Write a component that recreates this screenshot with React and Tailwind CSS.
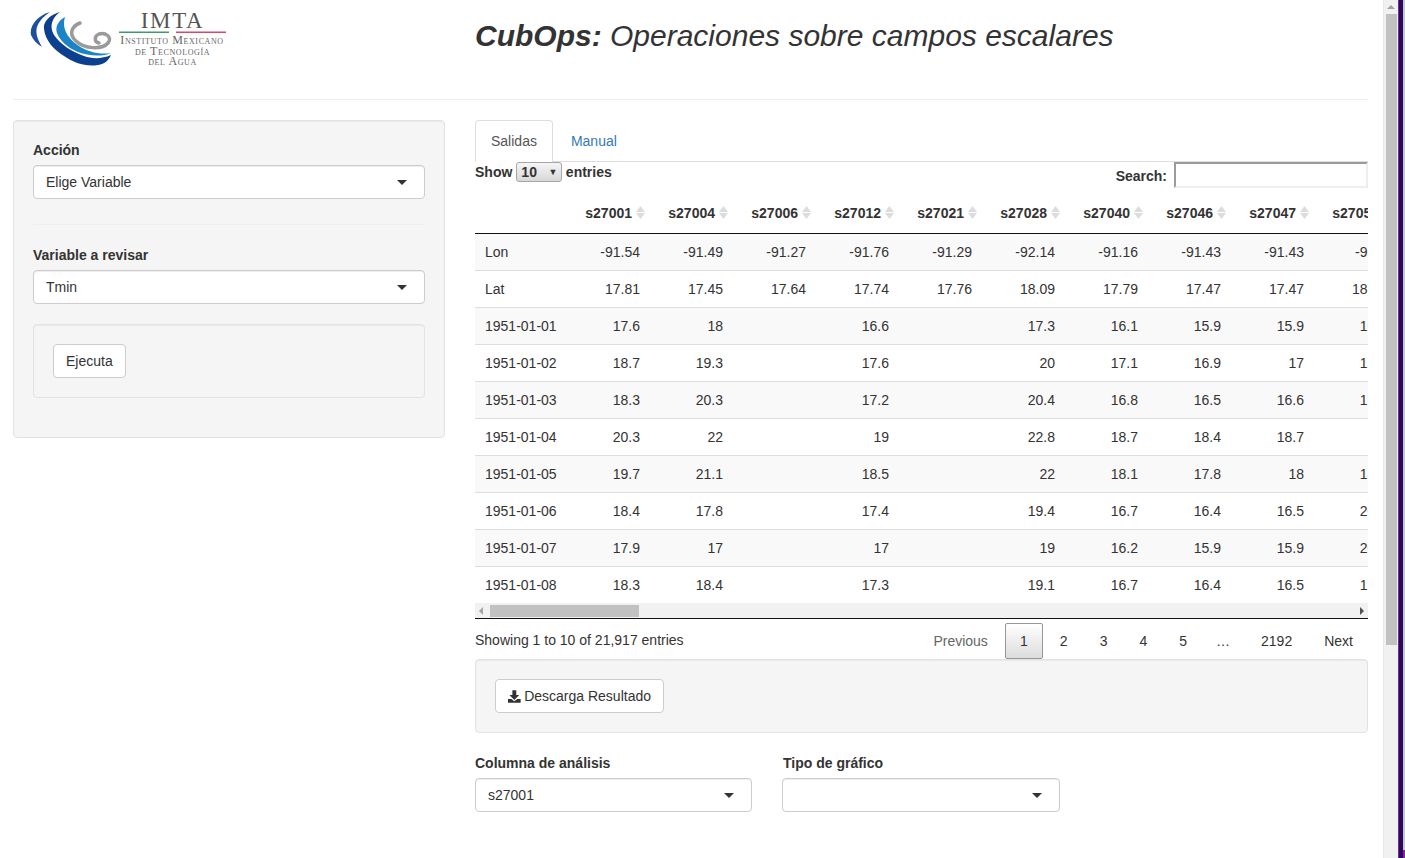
import React from 'react'

const columns = ['s27001', 's27004', 's27006', 's27012', 's27021', 's27028', 's27040', 's27046', 's27047', 's27050']

const rows = [
  ['Lon', '-91.54', '-91.49', '-91.27', '-91.76', '-91.29', '-92.14', '-91.16', '-91.43', '-91.43', '-91.4'],
  ['Lat', '17.81', '17.45', '17.64', '17.74', '17.76', '18.09', '17.79', '17.47', '17.47', '18.01'],
  ['1951-01-01', '17.6', '18', '', '16.6', '', '17.3', '16.1', '15.9', '15.9', '16.5'],
  ['1951-01-02', '18.7', '19.3', '', '17.6', '', '20', '17.1', '16.9', '17', '17.5'],
  ['1951-01-03', '18.3', '20.3', '', '17.2', '', '20.4', '16.8', '16.5', '16.6', '17.2'],
  ['1951-01-04', '20.3', '22', '', '19', '', '22.8', '18.7', '18.4', '18.7', '19'],
  ['1951-01-05', '19.7', '21.1', '', '18.5', '', '22', '18.1', '17.8', '18', '18.6'],
  ['1951-01-06', '18.4', '17.8', '', '17.4', '', '19.4', '16.7', '16.4', '16.5', '20.1'],
  ['1951-01-07', '17.9', '17', '', '17', '', '19', '16.2', '15.9', '15.9', '20.4'],
  ['1951-01-08', '18.3', '18.4', '', '17.3', '', '19.1', '16.7', '16.4', '16.5', '17.1'],
]

const Caret = () => (
  <span className="w-0 h-0 border-x-[5px] border-x-transparent border-t-[5px] border-t-[#333]"></span>
)

const SelectBox = ({ value, className }) => (
  <div className={`flex items-center justify-between h-[34px] pl-[12px] pr-[17px] bg-white border border-[#ccc] rounded-[4px] shadow-[inset_0_1px_1px_rgba(0,0,0,0.075)] ${className || ''}`}>
    <span>{value}</span>
    <Caret />
  </div>
)

const SortIcon = () => (
  <svg width="9" height="13" viewBox="0 0 9 13" className="shrink-0 ml-[4px]">
    <path d="M4.5 0 L9 6 L0 6 Z" fill="#dcdcdc" />
    <path d="M4.5 13 L9 7 L0 7 Z" fill="#dcdcdc" />
  </svg>
)

const Logo = () => (
  <svg width="200" height="58" viewBox="0 0 200 58" className="block">
    <path d="M20 2 C8 5 -1 16 1 25 C3 30 7 34 12 37 C8 30 5 24 7 17 C9 11 14 6 20 2 Z" fill="#1c4f9c" />
    <path d="M30 2 C20 5 13 11 14 19 C15 30 24 40 34 46 C44 53 56 57 68 55 C75 54 79 50 81 45 C72 49 62 49 54 46 C42 42 30 34 24 25 C19 16 22 8 30 2 Z" fill="#0d3f8f" />
    <path d="M35 7 C28 11 25 17 27 23 C30 31 38 38 48 42 C58 46 72 47 81 43 C70 45 58 42 49 36 C40 30 31 20 35 7 Z" fill="#1b84c6" />
    <path d="M50 13 C42 16 38 24 46 31 C54 39 72 40 78 33 C83 27 75 22 69 24 C64 26 64 32 69 33" fill="none" stroke="#9a9a9a" strokeWidth="3.5" strokeLinecap="round" />
    <text x="142.5" y="18" textAnchor="middle" fontFamily="'Liberation Serif', serif" fontSize="23" letterSpacing="1.6" fill="#555">IMTA</text>
    <rect x="89" y="21.5" width="50" height="1.5" fill="#3d9a6b" />
    <rect x="146" y="21.5" width="50" height="1.5" fill="#d8476a" />
    <text x="142" y="34" textAnchor="middle" fontFamily="'Liberation Serif', serif" fontSize="12" letterSpacing="0.6" fill="#666" style={{ fontVariant: 'small-caps' }}>Instituto Mexicano</text>
    <text x="142.5" y="45" textAnchor="middle" fontFamily="'Liberation Serif', serif" fontSize="12" letterSpacing="0.6" fill="#666" style={{ fontVariant: 'small-caps' }}>de Tecnología</text>
    <text x="142.5" y="55" textAnchor="middle" fontFamily="'Liberation Serif', serif" fontSize="12" letterSpacing="0.6" fill="#666" style={{ fontVariant: 'small-caps' }}>del Agua</text>
  </svg>
)

const DownloadIcon = () => (
  <svg width="13" height="13" viewBox="0 0 13 13" className="mr-[3.5px]">
    <path d="M4.5 0 H8.5 V5 H11.5 L6.5 10 L1.5 5 H4.5 Z" fill="#333" />
    <path d="M0 9 H3.5 L6.5 11.5 L9.5 9 H13 V13 H0 Z" fill="#333" />
  </svg>
)

const Pager = ({ children, muted, className }) => (
  <span className={`${className || 'px-[15px]'} ml-[2px] ${muted ? 'text-[#666]' : 'text-[#333]'}`}>{children}</span>
)

export default function App() {
  return (
    <div className="flex h-[858px] overflow-hidden bg-white text-[14px] leading-[20px] text-[#333] font-['Liberation_Sans',Arial,sans-serif]">
      <div className="w-[1383px] shrink-0 pl-[13px] pr-[15px]">
        <div className="flex h-[99px]">
          <div className="w-[462px] shrink-0 pt-[10px] pl-[17px]">
            <Logo />
          </div>
          <h1 className="text-[30px] leading-[33px] italic text-[#333] mt-[19px]">
            <b>CubOps:</b> Operaciones sobre campos escalares
          </h1>
        </div>
        <div className="h-px bg-[#eee]"></div>

        <div className="flex mt-[20px]">
          <div className="w-[432px] h-[318px] shrink-0 px-[19px] pt-[19px] bg-[#f5f5f5] border border-[#e3e3e3] rounded-[4px] shadow-[inset_0_1px_1px_rgba(0,0,0,0.05)]">
            <label className="block font-bold mb-[5px]">Acción</label>
            <SelectBox value="Elige Variable" />
            <div className="h-px bg-[#eee] mt-[25px] mb-[20px]"></div>
            <label className="block font-bold mb-[5px]">Variable a revisar</label>
            <SelectBox value="Tmin" />
            <div className="mt-[20px] h-[74px] p-[19px] bg-[#f5f5f5] border border-[#e3e3e3] rounded-[4px] shadow-[inset_0_1px_1px_rgba(0,0,0,0.05)]">
              <button className="h-[34px] px-[12px] bg-white border border-[#ccc] rounded-[4px]">Ejecuta</button>
            </div>
          </div>

          <div className="w-[893px] ml-[30px] shrink-0">
            <div className="flex h-[42px] border-b border-[#ddd]">
              <div className="h-[42px] px-[15px] pt-[10px] bg-white border border-[#ddd] border-b-white rounded-t-[4px] text-[#555]">Salidas</div>
              <div className="h-[41px] pl-[18px] pr-[15px] pt-[11px] text-[#337ab7]">Manual</div>
            </div>

            <div className="flex justify-between h-[26px]">
              <div className="flex items-start font-bold">
                <span>Show</span>
                <div className="flex items-center justify-between w-[46px] h-[20px] ml-[4px] mr-[3.5px] pl-[4px] pr-[4px] border border-[#a6a6a6] rounded-[3px] bg-gradient-to-b from-[#f5f5f5] to-[#d8d8d8]">
                  <span>10</span>
                  <span className="text-[9px] leading-none text-[#333]">▼</span>
                </div>
                <span>entries</span>
              </div>
              <div className="flex items-center font-bold">
                <span className="mr-[7px] mt-[1px]">Search:</span>
                <input className="w-[194px] h-[26px] bg-white border-2 border-t-[#9b9b9b] border-l-[#9b9b9b] border-r-[#eeeeee] border-b-[#eeeeee] outline-none" />
              </div>
            </div>

            <div className="overflow-hidden w-[893px]">
              <table className="table-fixed w-[922px] border-collapse">
                <colgroup>
                  <col className="w-[92px]" />
                  {columns.map(c => <col key={c} className="w-[83px]" />)}
                </colgroup>
                <thead>
                  <tr className="h-[45px]">
                    <th></th>
                    {columns.map(c => (
                      <th key={c} className="pr-[5px] font-bold text-right align-middle pt-[12px] pb-[7px]">
                        <div className="flex items-center justify-end">
                          <span>{c}</span>
                          <SortIcon />
                        </div>
                      </th>
                    ))}
                  </tr>
                </thead>
                <tbody className="border-t border-[#111]">
                  {rows.map((row, i) => (
                    <tr key={row[0]} className={`h-[37px] ${i % 2 === 0 ? 'bg-[#f9f9f9]' : 'bg-white'} ${i > 0 ? 'border-t border-[#ddd]' : ''}`}>
                      {row.map((v, j) => (
                        <td key={j} className={`pt-[1px] whitespace-nowrap ${j === 0 ? 'pl-[10px] text-left' : 'pr-[10px] text-right'}`}>{v}</td>
                      ))}
                    </tr>
                  ))}
                </tbody>
              </table>
            </div>

            <div className="flex items-center justify-between h-[15px] px-[4px] bg-[#f1f1f1] border-b border-[#111] box-content">
              <div className="flex items-center">
                <span className="w-0 h-0 border-y-[4px] border-y-transparent border-r-[4px] border-r-[#a3a3a3]"></span>
                <span className="w-[149px] h-[12px] ml-[7px] bg-[#c1c1c1]"></span>
              </div>
              <span className="w-0 h-0 border-y-[4px] border-y-transparent border-l-[4px] border-l-[#505050]"></span>
            </div>

            <div className="flex items-center justify-between h-[40px] pt-[3px]">
              <span className="mt-[-1px]">Showing 1 to 10 of 21,917 entries</span>
              <div className="flex items-center h-[37px]">
                <Pager muted>Previous</Pager>
                <span className="flex items-center justify-center w-[38px] h-[36px] ml-[2px] border border-[#979797] rounded-[2px] bg-gradient-to-b from-white to-[#dcdcdc]">1</span>
                <Pager>2</Pager>
                <Pager>3</Pager>
                <Pager>4</Pager>
                <Pager>5</Pager>
                <Pager className="pl-[12px] pr-[14px]">…</Pager>
                <Pager>2192</Pager>
                <Pager>Next</Pager>
              </div>
            </div>

            <div className="h-[74px] p-[19px] bg-[#f5f5f5] border border-[#e3e3e3] rounded-[4px] shadow-[inset_0_1px_1px_rgba(0,0,0,0.05)]">
              <button className="flex items-center w-[169px] h-[34px] px-[12px] bg-white border border-[#ccc] rounded-[4px] whitespace-nowrap">
                <DownloadIcon />
                Descarga Resultado
              </button>
            </div>

            <div className="flex mt-[20px]">
              <div className="w-[277px]">
                <label className="block font-bold mb-[5px]">Columna de análisis</label>
                <SelectBox value="s27001" />
              </div>
              <div className="w-[278px] ml-[30px]">
                <label className="block font-bold mb-[5px] ml-px">Tipo de gráfico</label>
                <SelectBox value="" />
              </div>
            </div>
          </div>
        </div>
      </div>

      {/* browser scrollbar */}
      <div className="w-[15px] shrink-0 h-full bg-[#f1f1f1] border-l border-[#e8e8e8] flex flex-col items-center">
        <span className="mt-[5px] w-0 h-0 border-x-[4px] border-x-transparent border-b-[4px] border-b-[#a3a3a3]"></span>
        <span className="mt-[5px] w-[11px] h-[631px] bg-[#c1c1c1]"></span>
      </div>
      {/* sliver of the desktop behind the window */}
      <div className="flex w-[7px] shrink-0 h-full">
        <div className="w-[1px] bg-[#7b2a8f]"></div>
        <div className="w-[4px] bg-[#2a0a5e]"></div>
        <div className="flex flex-col w-[2px]">
          <div className="flex-1 bg-[#c8c8c8]"></div>
          <div className="h-[8px] bg-[#7b2a8f]"></div>
        </div>
      </div>
    </div>
  )
}
